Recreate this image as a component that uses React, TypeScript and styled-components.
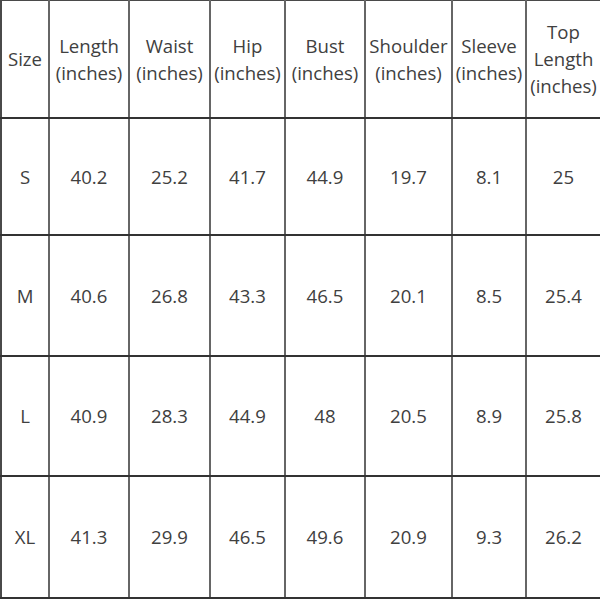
import React from 'react';
import styled, {createGlobalStyle} from "styled-components";

const GlobalStyle = createGlobalStyle`
    html, body {
        margin: 0;
        padding: 0;
        background: #ffffff;
    }
    body {
        font-family: "Open Sans", "Noto Sans", sans-serif;
    }
`

const headers = [
    "Size",
    "Length (inches)",
    "Waist (inches)",
    "Hip (inches)",
    "Bust (inches)",
    "Shoulder (inches)",
    "Sleeve (inches)",
    "Top Length (inches)",
];

const rows = [
    ["S", "40.2", "25.2", "41.7", "44.9", "19.7", "8.1", "25"],
    ["M", "40.6", "26.8", "43.3", "46.5", "20.1", "8.5", "25.4"],
    ["L", "40.9", "28.3", "44.9", "48", "20.5", "8.9", "25.8"],
    ["XL", "41.3", "29.9", "46.5", "49.6", "20.9", "9.3", "26.2"],
];

const colWidths = [48, 80, 81, 75, 80, 87, 74, 75];
const rowHeights = [117, 121, 120, 122];

const App = () => {
    return (
        <>
            <GlobalStyle/>
            <SizeTable>
                <colgroup>
                    {colWidths.map((w, i) => <col key={i} style={{width: w}}/>)}
                </colgroup>
                <thead>
                <HeadRow>
                    {headers.map((h, i) => (
                        <HeadCell key={i}>{h}</HeadCell>
                    ))}
                </HeadRow>
                </thead>
                <tbody>
                {rows.map((r, ri) => (
                    <BodyRow key={ri} $height={rowHeights[ri]}>
                        {r.map((v, ci) => (
                            <Cell key={ci} $selected={ri === rows.length - 1 && ci === r.length - 1}>{v}</Cell>
                        ))}
                    </BodyRow>
                ))}
                </tbody>
            </SizeTable>
        </>
    );
};

export default App;

const SizeTable = styled.table`
    width: 600px;
    table-layout: fixed;
    border-collapse: collapse;
    color: #404040;
    font-size: 18.6px;
    border-top: 1px solid #4a4a4a;
    border-left: 2px solid #4a4a4a;
`

const HeadRow = styled.tr`
    height: 117px;
`

const BodyRow = styled.tr<{ $height: number }>`
    height: ${p => p.$height}px;
`

const HeadCell = styled.th`
    font-weight: 400;
    line-height: 27px;
    text-align: center;
    vertical-align: middle;
    padding: 0;
    border-right: 2px solid #666666;
    border-bottom: 2px solid #333333;
    white-space: normal;
`

const Cell = styled.td<{ $selected?: boolean }>`
    text-align: center;
    vertical-align: middle;
    padding: 0;
    border-right: 2px solid ${p => p.$selected ? "#1f9d6c" : "#666666"};
    border-bottom: 2px solid #333333;
`
